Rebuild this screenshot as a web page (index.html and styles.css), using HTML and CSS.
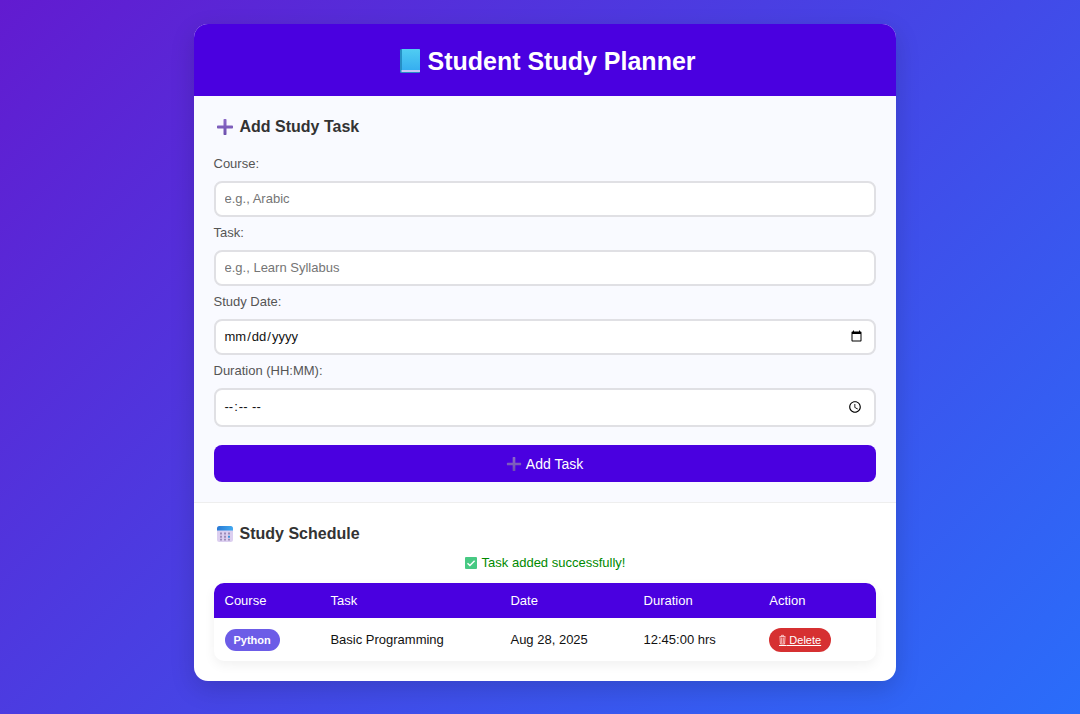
FILE: index.html
```html
<!DOCTYPE html>
<html lang="en">
<head>
<meta charset="utf-8">
<meta name="viewport" content="width=device-width, initial-scale=1">
<title>Student Study Planner</title>
<link rel="stylesheet" href="styles.css">
</head>
<body>
<svg class="sprite" aria-hidden="true">
  <defs>
    <linearGradient id="plus-fill" x1="0" y1="0" x2="0" y2="1"><stop offset="0" stop-color="#8d6bc8"/><stop offset="1" stop-color="#6d50ae"/></linearGradient>
    <symbol id="plus" viewBox="0 0 18 18"><path fill="url(#plus-fill)" d="M7.500 1.800Q7.500 1 8.200 1h1.600q.7 0 .7.800v5.700h5.700q.8 0 .8.700v1.600q0 .7-.8.700h-5.700v5.700q0 .8-.7.800H8.200q-.7 0-.7-.8v-5.700H1.800Q1 10.500 1 9.800V8.200q0-.7.8-.7h5.700z"/></symbol>
  </defs>
</svg>
<main class="card">
  <header class="card-header">
    <h1 class="title">
      <svg class="icon-book" viewBox="0 0 22 26" aria-hidden="true">
        <defs><linearGradient id="book" x1="0" y1="0" x2="0" y2="1"><stop offset="0" stop-color="#50cdf2"/><stop offset="1" stop-color="#36aef0"/></linearGradient></defs>
        <path fill="#258fc4" d="M2.500 1H20q1 0 1 1v22q0 1-1 1H2.500Q1 25 1 23.500v-21Q1 1 2.500 1z"/>
        <path fill="#c5c4f7" d="M2.500 22H21v2H2.500z"/>
        <path fill="url(#book)" d="M3 1h17q1 0 1 1v20H3z"/>
      </svg>
      <span>Student Study Planner</span>
    </h1>
  </header>
  <section class="section section-form">
    <h2 class="heading"><svg class="icon-heading" aria-hidden="true"><use href="#plus"/></svg><span>Add Study Task</span></h2>
    <form class="form">
      <div class="field">
        <label for="course">Course:</label>
        <input class="input" id="course" type="text" placeholder="e.g., Arabic">
      </div>
      <div class="field">
        <label for="task">Task:</label>
        <input class="input" id="task" type="text" placeholder="e.g., Learn Syllabus">
      </div>
      <div class="field">
        <label for="date">Study Date:</label>
        <input class="input input-picker" id="date" type="date">
      </div>
      <div class="field">
        <label for="duration">Duration (HH:MM):</label>
        <input class="input input-picker input-time" id="duration" type="time">
      </div>
      <button class="submit" type="button"><svg class="icon-submit" aria-hidden="true"><use href="#plus"/></svg><span>Add Task</span></button>
    </form>
  </section>
  <section class="section">
    <h2 class="heading">
      <svg class="icon-heading" viewBox="0 0 18 18" aria-hidden="true">
        <defs><linearGradient id="calendar"><stop offset="0" stop-color="#2879d4"/><stop offset="1" stop-color="#41aaf0"/></linearGradient></defs>
        <rect x="1" y="1" width="16" height="16" rx="2.500" fill="#dccff0"/>
        <path fill="url(#calendar)" d="M3.500 1h11Q17 1 17 3.500V5.500H1v-2Q1 1 3.500 1z"/>
        <g fill="#9b8bb8"><path d="M4 7.500h2v2H4zM8 7.500h2v2H8zM4 10.700h2v2H4zM8 10.700h2v2H8zM4 13.800h2v1.700H4zM8 13.800h2v1.700H8zM12 13.800h2v1.700h-2zM12 7.500h2v2h-2z"/></g>
        <path fill="#3b91da" d="M12 10.700h2v2h-2z"/>
      </svg>
      <span>Study Schedule</span>
    </h2>
    <p class="message" role="status">
      <svg class="icon-check" viewBox="0 0 14 14" aria-hidden="true"><rect x="1" y="1" width="12" height="12" rx="1" fill="#47c983"/><path d="M3.500 7.200l2.400 2.400 4.700-4.900" fill="none" stroke="#fff" stroke-width="1.400"/></svg>
      <span>Task added successfully!</span>
    </p>
    <table class="schedule">
      <colgroup><col class="col-course"><col class="col-task"><col class="col-date"><col class="col-duration"><col></colgroup>
      <thead><tr><th scope="col">Course</th><th scope="col">Task</th><th scope="col">Date</th><th scope="col">Duration</th><th scope="col">Action</th></tr></thead>
      <tbody>
        <tr>
          <td><span class="badge">Python</span></td>
          <td>Basic Programming</td>
          <td>Aug 28, 2025</td>
          <td>12:45:00 hrs</td>
          <td><a class="delete" href="#"><svg class="icon-trash" viewBox="0 0 7 12" aria-hidden="true"><g fill="none" stroke="#ffdcdc" stroke-width=".8"><path d="M.5 2.500h6M2.500 2.300v-1h2v1M1 3l.4 7h4.200L6 3M2.700 3.500v6M4.300 3.500v6"/></g><path d="M0 11.500h7" stroke="#fff"/></svg><span class="delete-label">&nbsp;Delete</span></a></td>
        </tr>
      </tbody>
    </table>
  </section>
</main>
</body>
</html>
```
FILE: styles.css
```css
* {
  box-sizing: border-box;
}

body {
  margin: 0;
  min-height: 100vh;
  padding: 24px 16px 32px 25px;
  background: linear-gradient(135deg, #621bd0, #2a6dfa) fixed;
  font-family: "Liberation Sans", Arial, sans-serif;
  font-size: 13px;
  line-height: 16px;
  color: #111;
}

.sprite {
  position: absolute;
  width: 0;
  height: 0;
}

.card {
  max-width: 702px;
  margin: 0 auto;
  overflow: hidden;
  border-radius: 14px;
  background: #fff;
  box-shadow: 0 8px 24px rgba(0, 0, 0, 0.15);
}

.card-header {
  padding: 21px 20px 19px;
  background: #4a00e0;
  color: #fff;
}

.title {
  display: flex;
  align-items: center;
  justify-content: center;
  gap: 6px;
  margin: 0;
  padding: 0 0 0 6px;
  font-size: 25px;
  line-height: 32px;
}

.icon-book {
  width: 22px;
  height: 26px;
}

.section {
  padding: 20px;
}

.section-form {
  background: #f9faff;
  border-bottom: 1px solid #eee;
}

.heading {
  display: flex;
  align-items: center;
  gap: 6px;
  margin: 0;
  padding-left: 2px;
  font-size: 16px;
  line-height: 22px;
  color: #333;
}

.icon-heading {
  width: 18px;
  height: 18px;
}

.form {
  display: flex;
  flex-direction: column;
  gap: 8px;
  padding-top: 18px;
}

.field {
  display: flex;
  flex-direction: column;
  gap: 9px;
  color: #555;
}

.input {
  width: 100%;
  height: 36px;
  padding: 7px 9px 8px;
  border: 2px solid #e0e0e4;
  border-radius: 8px;
  background: #fff;
  color: #111;
  font: inherit;
}

.input::placeholder {
  color: #757575;
}

.input-picker {
  padding-left: 8px;
}

.input-time {
  height: 39px;
}

.submit {
  display: flex;
  align-items: center;
  justify-content: center;
  gap: 4px;
  height: 37px;
  margin-top: 10px;
  border: 0;
  border-radius: 8px;
  background: #4a00e0;
  color: #fff;
  font: inherit;
  font-size: 14px;
  cursor: pointer;
}

.icon-submit {
  width: 16px;
  height: 16px;
}

.message {
  display: flex;
  align-items: center;
  justify-content: center;
  gap: 4px;
  margin: 10px 0 12px;
  color: #008a00;
}

.icon-check {
  width: 14px;
  height: 14px;
}

.schedule {
  width: 100%;
  table-layout: fixed;
  border-spacing: 0;
  overflow: hidden;
  border-radius: 10px;
  box-shadow: 0 4px 12px rgba(0, 0, 0, 0.06);
}

.col-course {
  width: 16%;
}

.col-task {
  width: 27.2%;
}

.col-date {
  width: 20.1%;
}

.col-duration {
  width: 19%;
}

.schedule th,
.schedule td {
  padding: 0 11px;
  text-align: left;
  vertical-align: middle;
}

.schedule th {
  height: 35px;
  background: #4a00e0;
  color: #fff;
  font-weight: normal;
}

.schedule td {
  height: 43px;
}

.badge {
  display: inline-block;
  padding: 3px 9px;
  border-radius: 11px;
  background: #6c5ce7;
  color: #fff;
  font-size: 11px;
  font-weight: bold;
  line-height: 16px;
}

.delete {
  display: inline-flex;
  align-items: center;
  padding: 4px 10px;
  border-radius: 12px;
  background: #d63031;
  color: #fff;
  font-size: 11px;
  line-height: 16px;
}

.icon-trash {
  width: 7px;
  height: 12px;
}
```
